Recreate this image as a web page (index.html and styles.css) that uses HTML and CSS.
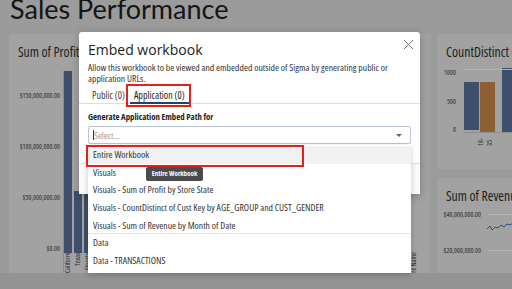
FILE: index.html
```html
<!DOCTYPE html>
<html lang="en">
<head>
  <meta charset="UTF-8" />
  <title>Sales Performance</title>
  <link rel="stylesheet" href="styles.css">
</head>
<body>
  <div class="page">
    <h1 class="title">Sales Performance</h1>

    <div class="dash">
      <section class="card card-profit">
        <h3 class="card-title">Sum of Profit by Store State</h3>
        <div class="chart">
          <div class="y-axis">
            <span>$150,000,000.00</span>
            <span>$100,000,000.00</span>
            <span>$50,000,000.00</span>
            <span>$0.00</span>
          </div>
          <div class="plot">
            <div class="bars">
              <div class="bar" style="height: 182px"></div>
              <div class="bar" style="height: 62px"></div>
              <div class="bar" style="height: 60px"></div>
              <div class="bar" style="height: 52px"></div>
              <div class="bar" style="height: 40px"></div>
            </div>
            <div class="x-labels">
              <span>California</span>
              <span>Texas</span>
              <span>Florida</span>
            </div>
          </div>
          <span class="axis-name">Store Name</span>
        </div>
      </section>

      <div class="side">
        <section class="card card-count">
          <h3 class="card-title">CountDistinct of Cust Key</h3>
          <div class="mini-chart">
            <div class="y-axis small">
              <span>1000</span>
              <span>500</span>
              <span>0</span>
            </div>
            <div class="mini-plot">
              <div class="grid-line"></div>
              <div class="group">
                <div class="bar" style="height: 48px"></div>
                <div class="bar orange" style="height: 50px"></div>
              </div>
              <div class="group">
                <div class="bar" style="height: 64px"></div>
              </div>
              <span class="group-label">18-35</span>
            </div>
          </div>
        </section>

        <section class="card card-rev">
          <h3 class="card-title">Sum of Revenue by Month of Date</h3>
          <div class="rev-chart">
            <div class="rev-row">
              <span class="rev-label">$40,000,000.00</span>
              <div class="rev-line"></div>
            </div>
            <svg class="spark" width="30" height="14" viewBox="0 0 30 14">
              <path d="M0 9 L3 6 L5 10 L8 7 L11 8 L14 5 L17 7 L20 4 L23 5 L26 3 L30 4" fill="none" stroke="#2f4a73" stroke-width="1"/>
            </svg>
            <div class="rev-row">
              <span class="rev-label">$20,000,000.00</span>
              <div class="rev-line"></div>
            </div>
          </div>
        </section>
      </div>
    </div>

    <div class="bottom-bar"></div>
  </div>

  <div class="modal">
    <div class="modal-head">
      <h2 class="modal-title">Embed workbook</h2>
      <svg class="close" width="11" height="11" viewBox="0 0 11 11">
        <path d="M1 1 L10 10 M10 1 L1 10" stroke="#666" stroke-width="0.9"/>
      </svg>
    </div>
    <p class="modal-desc">Allow this workbook to be viewed and embedded outside of Sigma by generating public or application URLs.</p>
    <div class="tabs">
      <span class="tab">Public (0)</span>
      <span class="tab active">Application (0)</span>
    </div>
    <div class="modal-body">
      <label class="field-label">Generate Application Embed Path for</label>
      <div class="select">
        <span class="caret-line"></span>
        <span class="placeholder">Select...</span>
        <span class="arrow"></span>
      </div>
    </div>
    <div class="modal-foot"></div>
  </div>

  <ul class="dropdown">
    <li class="opt hover">Entire Workbook</li>
    <li class="opt">Visuals</li>
    <li class="opt">Visuals - Sum of Profit by Store State</li>
    <li class="opt">Visuals - CountDistinct of Cust Key by AGE_GROUP and CUST_GENDER</li>
    <li class="opt sep">Visuals - Sum of Revenue by Month of Date</li>
    <li class="opt">Data</li>
    <li class="opt">Data - TRANSACTIONS</li>
  </ul>

  <div class="tooltip">Entire Workbook</div>

  <div class="mark mark-tab"></div>
  <div class="mark mark-opt"></div>
</body>
</html>
```

FILE: styles.css
```css
* {
  box-sizing: border-box;
  margin: 0;
  padding: 0;
}
body {
  font-family: "Open Sans", sans-serif;
  font-stretch: 80%;
  background: #9b9b9b;
  width: 512px;
  height: 289px;
  overflow: hidden;
  position: relative;
  color: #1d1d1d;
}
/* Dashboard behind the overlay */
.page {
  height: 289px;
  display: flex;
  flex-direction: column;
}
.title {
  font-family: Lato, sans-serif;
  font-weight: 400;
  font-size: 27px;
  line-height: 27px;
  margin-top: -5px;
  padding-left: 10px;
  color: #151515;
  height: 39px;
}
.dash {
  display: grid;
  grid-template-columns: 421px 200px;
  gap: 7px;
  padding-left: 9px;
  height: 239px;
}
.card {
  background: #a2a2a2;
  border-radius: 3px;
  overflow: hidden;
}
.card-title {
  font-weight: 400;
  font-size: 13.7px;
  line-height: 18px;
  white-space: nowrap;
  padding: 9px 0 0 9px;
  color: #1d1d1d;
}
.card-profit {
  height: 239px;
}
.chart {
  display: flex;
  padding-top: 10px;
  position: relative;
}
.y-axis {
  width: 51px;
  height: 182px;
  display: flex;
  flex-direction: column;
  justify-content: space-between;
  align-items: flex-end;
  padding-top: 20px;
  font-size: 7px;
  color: #2a2a2a;
}
.plot {
  margin-left: 3px;
  border-left: 1px solid #8a8a8a;
}
.bars {
  height: 182px;
  display: flex;
  align-items: flex-end;
  gap: 2px;
}
.bar {
  width: 8px;
  background: #3d4f6a;
}
.x-labels {
  display: flex;
  gap: 2px;
  height: 20px;
  overflow: hidden;
}
.x-labels span {
  width: 8px;
  writing-mode: vertical-rl;
  transform: rotate(180deg);
  font-size: 7px;
  color: #2a2a2a;
  text-align: right;
  line-height: 8px;
}
.axis-name {
  position: absolute;
  left: 401px;
  top: 191px;
  writing-mode: vertical-rl;
  transform: rotate(180deg);
  font-size: 7px;
  line-height: 8px;
  white-space: nowrap;
  color: #2a2a2a;
}
.side {
  display: flex;
  flex-direction: column;
  gap: 9px;
}
.card-count {
  height: 135px;
}
.mini-chart {
  display: flex;
  padding-top: 7px;
}
.y-axis.small {
  width: 19px;
  height: 66px;
  padding-top: 0;
}
.mini-plot {
  position: relative;
  margin-left: 7px;
  height: 64px;
  margin-top: 1px;
  display: flex;
  align-items: flex-end;
  gap: 6px;
  border-bottom: 1px solid #8f8f8f;
  width: 150px;
}
.grid-line {
  position: absolute;
  left: 0;
  right: 0;
  top: 0;
  border-top: 1px solid #b2b2b2;
}
.group {
  display: flex;
  gap: 1px;
  margin-left: 1px;
}
.group .bar {
  width: 15px;
}
.bar.orange {
  background: #8e5f33;
}
.group-label {
  position: absolute;
  left: 13px;
  top: 5px;
  margin-top: 64px;
  writing-mode: vertical-rl;
  transform: rotate(180deg);
  font-size: 7px;
  color: #2a2a2a;
}
.card-rev {
  height: 95px;
}
.rev-chart {
  padding-top: 5px;
}
.rev-row {
  display: flex;
  align-items: center;
  gap: 7px;
}
.rev-label {
  width: 44px;
  text-align: right;
  font-size: 7px;
  color: #2a2a2a;
}
.rev-line {
  flex: 1;
  border-top: 1px solid #b2b2b2;
}
.spark {
  display: block;
  margin: 1px 0 12px 50px;
}
.bottom-bar {
  margin-top: auto;
  height: 16px;
  background: #939393;
}
/* Modal */
.modal {
  position: absolute;
  left: 79px;
  top: 32px;
  width: 341px;
  height: 162px;
  background: #fff;
  border-radius: 3px;
  box-shadow: 0 2px 8px rgba(0, 0, 0, 0.25);
  display: flex;
  flex-direction: column;
}
.modal-head {
  display: flex;
  justify-content: space-between;
  padding: 9px 6px 0 9px;
}
.modal-title {
  font-weight: 400;
  font-size: 14px;
  font-stretch: 100%;
  line-height: 18px;
  color: #222;
}
.close {
  margin-top: -2px;
}
.modal-desc {
  font-size: 9.7px;
  line-height: 11px;
  color: #333;
  padding: 3px 20px 0 9px;
}
.tabs {
  display: flex;
  padding: 5px 0 0 13px;
  border-bottom: 1px solid #dedede;
}
.tab {
  font-size: 10px;
  line-height: 12px;
  color: #444;
  padding-bottom: 2px;
}
.tab.active {
  color: #1e1e1e;
  border-bottom: 2px solid #25416a;
  padding: 0 4px;
  margin-left: 5px;
  margin-bottom: -1px;
}
.modal-body {
  padding: 7px 9px 0;
}
.field-label {
  display: block;
  font-size: 8.8px;
  font-weight: 700;
  color: #222;
  line-height: 12px;
}
.select {
  margin-top: 3px;
  height: 18px;
  border: 1px solid #b9c4d4;
  border-radius: 2px;
  display: flex;
  align-items: center;
  padding-left: 4px;
  padding-right: 8px;
}
.caret-line {
  width: 1px;
  height: 10px;
  background: #333;
}
.placeholder {
  font-size: 9.5px;
  color: #9a9a9a;
  flex: 1;
}
.arrow {
  width: 0;
  height: 0;
  border-left: 3px solid transparent;
  border-right: 3px solid transparent;
  border-top: 3px solid #666;
}
.modal-foot {
  margin-top: auto;
  height: 31px;
  border-top: 1px solid #e2e2e2;
  background: #fafafa;
}
/* Dropdown list */
.dropdown {
  position: absolute;
  left: 88px;
  top: 145px;
  width: 323px;
  list-style: none;
  background: #fff;
  box-shadow: 0 2px 6px rgba(0, 0, 0, 0.2);
  padding: 1px 0 3px;
}
.opt {
  font-size: 9.7px;
  line-height: 17.7px;
  height: 17.7px;
  padding-left: 5px;
  color: #333;
  white-space: nowrap;
}
.opt.hover {
  background: #f1f1f1;
}
.opt.sep {
  border-bottom: 1px solid #e3e3e3;
}
.tooltip {
  position: absolute;
  left: 146px;
  top: 167px;
  width: 57px;
  text-align: center;
  background: #4b4b4b;
  color: #fff;
  font-size: 7px;
  font-weight: 700;
  padding: 2px 0;
  border-radius: 2px;
  line-height: 10px;
  white-space: nowrap;
}
/* Red highlight boxes */
.mark {
  position: absolute;
  border: 2px solid #e3211c;
}
.mark-tab {
  left: 126px;
  top: 84px;
  width: 65px;
  height: 23px;
}
.mark-opt {
  left: 86px;
  top: 145px;
  width: 218px;
  height: 22px;
}
```
